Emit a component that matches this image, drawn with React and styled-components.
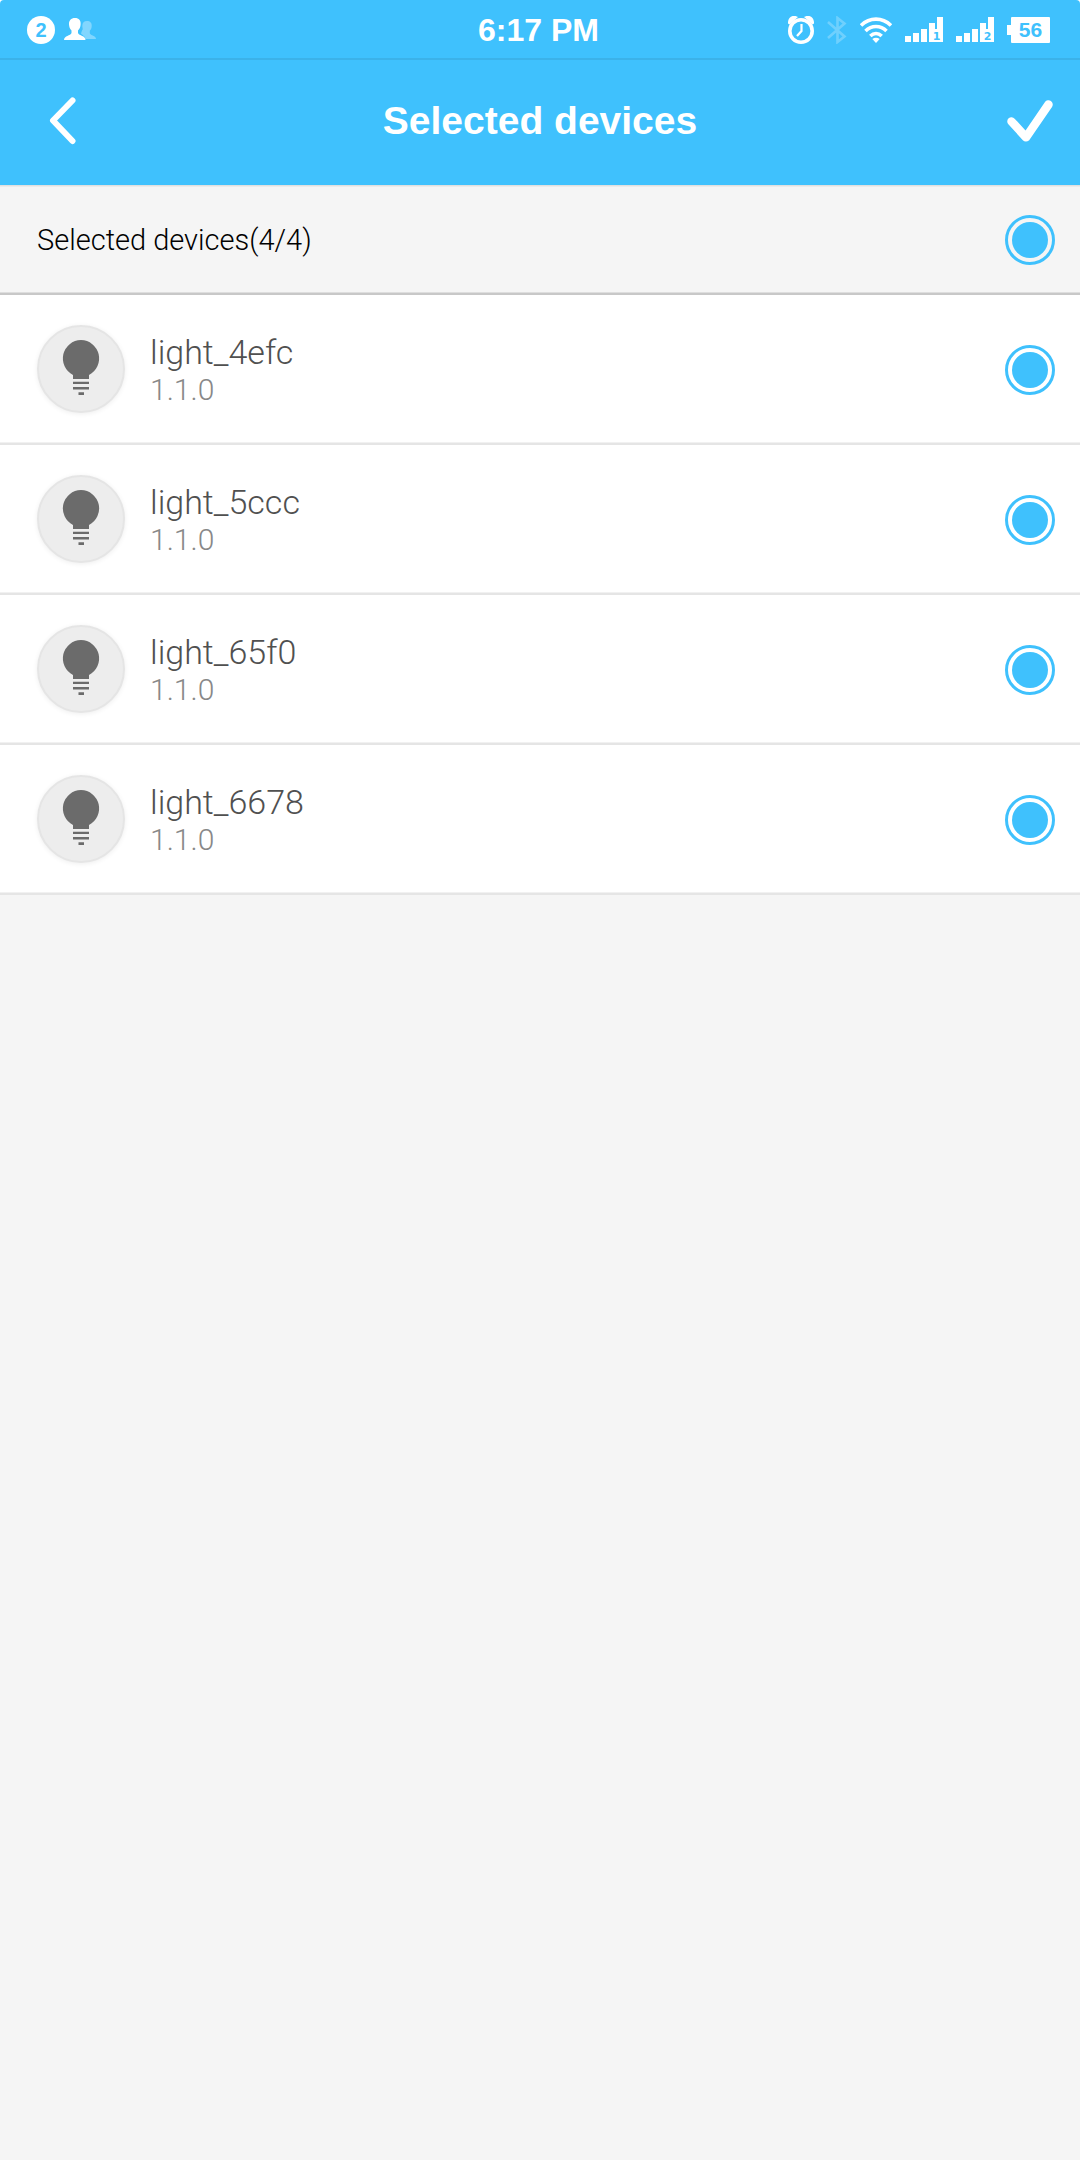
import React, { useState } from "react";
import styled, { createGlobalStyle } from "styled-components";

const blue = "#3fc1fd";

const GlobalStyle = createGlobalStyle`
  *, *::before, *::after { box-sizing: border-box; }
  body {
    margin: 0;
    background: #f5f5f5;
    font-family: "Liberation Sans", Arial, sans-serif;
  }
`;

const TopArea = styled.div`
  background: #fff;
`;

const StatusBar = styled.div`
  display: grid;
  grid-template-columns: 1fr auto 1fr;
  align-items: center;
  height: 60px;
  padding: 0 30px 0 27px;
  background: ${blue};
  border-bottom: 2px solid #3bb2e9;
  border-radius: 4px 4px 0 0;
  color: #fff;
`;

const StatusGroup = styled.div`
  display: flex;
  align-items: center;
  justify-content: ${(p) => (p.$end ? "flex-end" : "flex-start")};
  gap: ${(p) => (p.$end ? 13 : 9)}px;
  padding-top: 2px;
`;

const CountBadge = styled.span`
  width: 28px;
  height: 28px;
  border-radius: 50%;
  background: #fff;
  color: ${blue};
  font-size: 20px;
  font-weight: 700;
  line-height: 28px;
  text-align: center;
`;

const Clock = styled.time`
  padding-top: 2px;
  font-size: 32px;
  font-weight: 700;
  line-height: 36px;
`;

const Glyph = styled.svg`
  display: block;
  flex: none;
`;

const Header = styled.header`
  display: grid;
  grid-template-columns: 1fr auto 1fr;
  align-items: center;
  height: 125px;
  padding: 0 10px 4px;
  background: ${blue};
  color: #fff;
`;

const Title = styled.h1`
  margin: 0;
  font-size: 39px;
  font-weight: 700;
  line-height: 44px;
`;

const IconButton = styled.button`
  display: flex;
  align-items: center;
  justify-content: center;
  width: ${(p) => (p.$end ? 80 : 104)}px;
  height: 80px;
  justify-self: ${(p) => (p.$end ? "end" : "start")};
  padding: 0;
  border: 0;
  background: none;
  color: inherit;
  cursor: pointer;
`;

const Summary = styled.div`
  display: flex;
  align-items: center;
  justify-content: space-between;
  height: 110px;
  padding: 0 25px 0 37px;
  background: #f5f5f5;
  box-shadow: inset 0 1px #e0e0e0, inset 0 2px #ebebeb, inset 0 -2px #c8c8c8,
    inset 0 -3px #dedede;
`;

const SummaryLabel = styled.label`
  color: #000;
  font-family: Roboto, sans-serif;
  font-size: 29px;
  font-weight: 300;
  line-height: 34px;
`;

const DeviceList = styled.ul`
  margin: 0;
  padding: 0;
  list-style: none;
`;

const DeviceRow = styled.li`
  display: flex;
  align-items: center;
  justify-content: space-between;
  height: 150px;
  padding: 0 25px 0 37px;
  background: #fff;
  box-shadow: inset 0 -2px #e5e5e5, inset 0 -3px #f1f1f1;
`;

const DeviceLabel = styled.label`
  display: flex;
  flex: 1;
  align-items: center;
  gap: 25px;
  padding-bottom: 2px;
  font-family: Roboto, sans-serif;
  font-weight: 300;
`;

const Avatar = styled.span`
  display: block;
  width: 88px;
  height: 88px;
  border: 2px solid #e5e5e5;
  border-radius: 50%;
  background: #ededed;
  box-shadow: 0 1px 5px rgba(0, 0, 0, 0.07);
`;

const DeviceText = styled.span`
  display: flex;
  flex-direction: column;
`;

const DeviceName = styled.span`
  color: #505050;
  font-size: 34px;
  line-height: 42px;
`;

const DeviceVersion = styled.span`
  color: #888;
  font-size: 30px;
  line-height: 34px;
`;

const Check = styled.input.attrs({ type: "checkbox" })`
  appearance: none;
  flex: none;
  width: 50px;
  height: 50px;
  margin: 0;
  padding: 4px;
  border: 3px solid ${blue};
  border-radius: 50%;
  cursor: pointer;
  &:checked {
    background: ${blue} content-box;
  }
`;

function PeopleIcon() {
  return (
    <Glyph width="32" height="24" viewBox="0 0 32 24" fill="#fff" aria-hidden="true">
      <path
        opacity="0.35"
        d="M23 3c3.200 0 5 2 4.700 5 0 2-.7 3.500-1.900 4.700v2.600c.8 2.700 6.200 2 6.200 5.700H21.500c-.5-3-3.500-4-4.500-5.500l1-3c1.500-1.500.2-2.500.3-4.500C18.300 4.800 20 3 23 3z"
      />
      <path d="M11 0c4 0 6 2.500 5.600 6.500-.1 2.500-1.100 4.500-2.600 6V15c1 3 7.500 2.500 7.500 7H0c0-4.500 6.500-4 7.500-7v-2.500C6 11 5.200 9 5 6.500 4.800 2.500 7 0 11 0z" />
    </Glyph>
  );
}

function AlarmIcon() {
  return (
    <Glyph width="26" height="28" viewBox="0 0 26 28" fill="none" stroke="#fff" aria-hidden="true">
      <circle cx="13" cy="15" r="11.200" strokeWidth="3.600" />
      <path d="M13.500 8v7l-4.500 5" strokeWidth="2.200" />
      <path d="M0 7.500C-.5 1 5-2 10 1L1.500 8.500zM26 7.500C26.500 1 21-2 16 1l8.500 7.500z" fill="#fff" stroke="none" />
    </Glyph>
  );
}

function BluetoothIcon() {
  return (
    <Glyph width="20" height="28" viewBox="0 0 20 28" fill="none" stroke="#fff" strokeWidth="2.600" opacity="0.25" aria-hidden="true">
      <path d="M1 6l16.500 14.500-7 5.500V2l7 5.500L1 22" />
    </Glyph>
  );
}

function WifiIcon() {
  return (
    <Glyph width="32" height="26" viewBox="0 0 32 26" fill="none" stroke="#fff" strokeWidth="3.600" aria-hidden="true">
      <path d="M1 8.500c8.500-8.500 21.500-8.500 30 0M5.500 14c6-6 15-6 21 0M10.300 19c3.400-3.200 8-3.200 11.400 0" />
      <path d="M12.300 22q3.700-2.500 7.400 0L16 26z" fill="#fff" stroke="none" />
    </Glyph>
  );
}

function SignalIcon({ sim }) {
  return (
    <Glyph width="38" height="26" viewBox="0 0 38 26" fill="#fff" role="img" aria-label={"SIM " + sim}>
      <path d="M0 19h6v6H0zM8 16h6v9H8zM16 12h6v13h-6zM24 6h6v6h2V0h6v25H24z" />
      <text x="31.500" y="23" fill={blue} fontSize="11" fontWeight="700" textAnchor="middle" fontFamily="DejaVu Sans">
        {sim}
      </text>
    </Glyph>
  );
}

const Battery = styled.span`
  display: flex;
  align-items: center;
  &::before {
    content: "";
    width: 4px;
    height: 10px;
    background: #fff;
  }
`;

const BatteryBody = styled.span`
  width: 39px;
  height: 26px;
  border-radius: 1px;
  background: #fff;
  color: ${blue};
  font-size: 21px;
  font-weight: 700;
  line-height: 26px;
  text-align: center;
`;

function BulbIcon() {
  return (
    <Glyph width="84" height="84" viewBox="2 2 84 84" fill="#6b6b6b" aria-hidden="true">
      <path d="M44 15a18.500 18.500 0 0 1 8 35v4H36v-4a18.500 18.500 0 0 1 8-35z" />
      <path d="M36 56.700h16V59H36zM36 62h16v2.500H36zM41.500 67.300H47V70h-5.500z" />
    </Glyph>
  );
}

const devices = [
  { name: "light_4efc", version: "1.1.0" },
  { name: "light_5ccc", version: "1.1.0" },
  { name: "light_65f0", version: "1.1.0" },
  { name: "light_6678", version: "1.1.0" },
];

export default function App() {
  const [selected, setSelected] = useState(devices.map((d) => d.name));
  const all = selected.length === devices.length;

  const toggle = (name) =>
    setSelected((now) =>
      now.includes(name) ? now.filter((n) => n !== name) : [...now, name]
    );

  return (
    <>
      <GlobalStyle />
      <TopArea>
        <StatusBar>
          <StatusGroup>
            <CountBadge>2</CountBadge>
            <PeopleIcon />
          </StatusGroup>
          <Clock>6:17 PM</Clock>
          <StatusGroup $end>
            <AlarmIcon />
            <BluetoothIcon />
            <WifiIcon />
            <SignalIcon sim="1" />
            <SignalIcon sim="2" />
            <Battery>
              <BatteryBody>56</BatteryBody>
            </Battery>
          </StatusGroup>
        </StatusBar>
        <Header>
          <IconButton type="button" aria-label="Back">
            <Glyph width="32" height="48" viewBox="0 0 32 48" fill="none" stroke="#fff" strokeWidth="6" strokeLinecap="round" strokeLinejoin="round">
              <path d="M26.500 3.500L7 23.500l19.500 20.500" />
            </Glyph>
          </IconButton>
          <Title>Selected devices</Title>
          <IconButton type="button" aria-label="Confirm" $end>
            <Glyph width="46" height="42" viewBox="0 0 46 42" fill="none" stroke="#fff" strokeWidth="8.500" strokeLinecap="round" strokeLinejoin="round">
              <path d="M4.500 21.500L19 37.300 41.500 4.500" />
            </Glyph>
          </IconButton>
        </Header>
      </TopArea>
      <main>
        <Summary>
          <SummaryLabel htmlFor="all">
            Selected devices({selected.length}/{devices.length})
          </SummaryLabel>
          <Check
            id="all"
            checked={all}
            onChange={() => setSelected(all ? [] : devices.map((d) => d.name))}
          />
        </Summary>
        <DeviceList>
          {devices.map((d) => (
            <DeviceRow key={d.name}>
              <DeviceLabel htmlFor={d.name}>
                <Avatar>
                  <BulbIcon />
                </Avatar>
                <DeviceText>
                  <DeviceName>{d.name}</DeviceName>
                  <DeviceVersion>{d.version}</DeviceVersion>
                </DeviceText>
              </DeviceLabel>
              <Check
                id={d.name}
                checked={selected.includes(d.name)}
                onChange={() => toggle(d.name)}
              />
            </DeviceRow>
          ))}
        </DeviceList>
      </main>
    </>
  );
}
